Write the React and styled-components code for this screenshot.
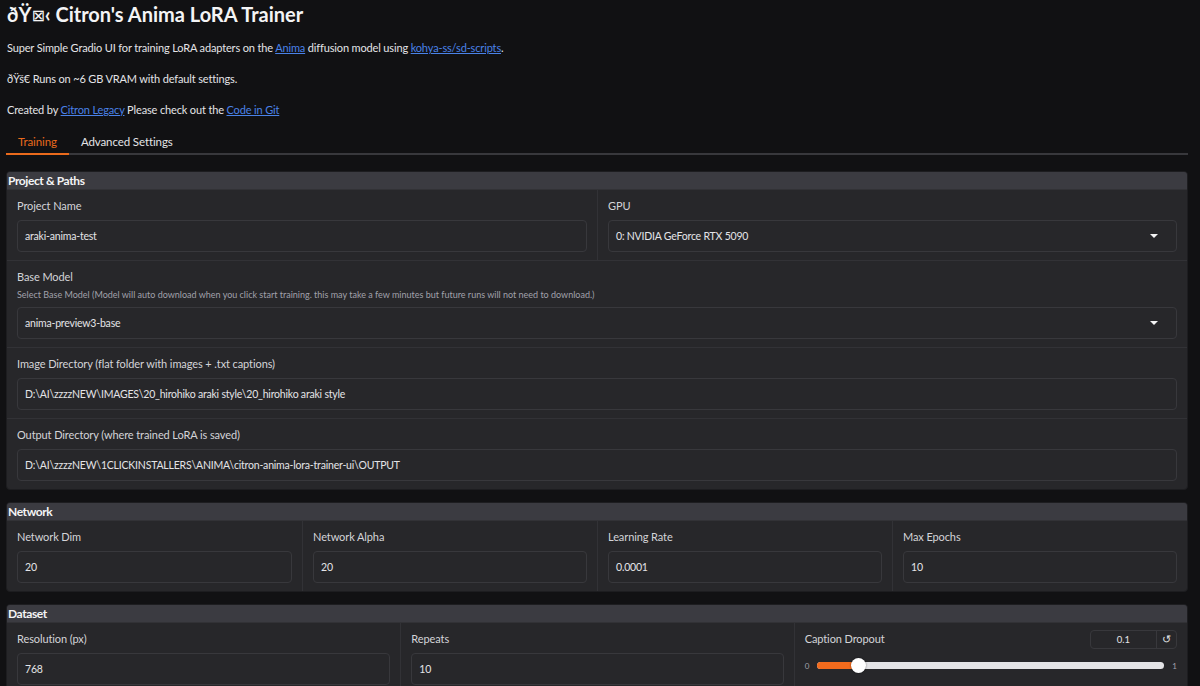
import React from 'react'
import styled, { createGlobalStyle } from 'styled-components';

const GlobalStyle = createGlobalStyle`
  html, body {
    margin: 0;
    padding: 0;
    background: #111113;
  }
  body {
    font-family: Lato, "Liberation Sans", sans-serif;
    color: #e4e4e7;
    overflow: hidden;
  }
`

const Page = styled.div`
  width: 1200px;
  height: 686px;
  box-sizing: border-box;
  padding: 0 12px 0 6px;
  overflow: hidden;
`

const Title = styled.h1`
  margin: 0;
  padding: 2px 0 0 1px;
  font-size: 20px;
  line-height: 24px;
  font-weight: 700;
  color: #f4f4f5;
`

const Para = styled.p`
  margin: 0;
  padding-left: 1px;
  font-size: 11px;
  letter-spacing: -0.15px;
  line-height: 16px;
  color: #e4e4e7;
  margin-top: ${(p) => p.$top}px;
`

const Link = styled.a`
  color: #4a82e8;
  text-decoration: underline;
`

const Missing = styled.span`
  display: inline-block;
  font-size: 16px;
  font-family: "DejaVu Sans", sans-serif;
  font-weight: 400;
  vertical-align: 1px;
`

const TabBar = styled.div`
  display: flex;
  margin-top: 13px;
  border-bottom: 2px solid #38383c;
`

const Tab = styled.div`
  padding: 0 12px;
  height: 24px;
  line-height: 22px;
  font-size: 11.5px;
  letter-spacing: -0.1px;
  color: ${(p) => (p.$active ? '#ea6a1c' : '#e4e4e7')};
  margin-bottom: -2px;
  box-sizing: border-box;
  border-bottom: 2px solid ${(p) => (p.$active ? '#ea6a1c' : 'transparent')};
`

const Panel = styled.section`
  margin-top: ${(p) => p.$top}px;
  background: #27272a;
  border: 1px solid #1d1d20;
  border-radius: 4px;
  overflow: hidden;
`

const PanelHeader = styled.div`
  height: 17px;
  line-height: 17px;
  background: #3b3b41;
  padding-left: 1px;
  font-size: 12px;
  letter-spacing: -0.4px;
  font-weight: 700;
  color: #f4f4f5;
`

const Row = styled.div`
  display: grid;
  grid-template-columns: repeat(${(p) => p.$cols}, 1fr);
  border-top: 1px solid #323236;
  &:first-of-type {
    border-top: none;
  }
`

const Cell = styled.div`
  padding: 8px 10px 8px;
  border-left: 1px solid #323236;
  &:first-child {
    border-left: none;
  }
`

const LabelLine = styled.div`
  display: flex;
  align-items: center;
  justify-content: space-between;
  height: 16px;
`

const Label = styled.div`
  font-size: 11px;
  letter-spacing: -0.1px;
  line-height: 16px;
  color: #d4d4d8;
`

const Info = styled.div`
  font-size: 9px;
  line-height: 12px;
  color: #a1a1aa;
  margin-top: 4px;
`

const Field = styled.div`
  margin-top: 6px;
  height: 32px;
  box-sizing: border-box;
  border: 1px solid #38383c;
  border-radius: 4px;
  background: #27272a;
  display: flex;
  align-items: center;
  justify-content: space-between;
  padding: 0 18px 0 7px;
  font-size: 10.5px;
  letter-spacing: -0.2px;
  color: #e4e4e7;
`

const Caret = styled.span`
  width: 0;
  height: 0;
  border-left: 4px solid transparent;
  border-right: 4px solid transparent;
  border-top: 4px solid #f4f4f5;
`

const NumberBox = styled.div`
  display: flex;
  height: 19px;
  box-sizing: border-box;
  border: 1px solid #38383c;
  border-radius: 4px;
  font-size: 9.5px;
  color: #e4e4e7;
`

const NumberValue = styled.div`
  width: 65px;
  display: flex;
  align-items: center;
  justify-content: center;
  border-right: 1px solid #38383c;
`

const ResetBtn = styled.div`
  width: 19px;
  display: flex;
  align-items: center;
  justify-content: center;
  font-size: 11px;
`

const SliderRow = styled.div`
  display: flex;
  align-items: center;
  gap: 8px;
  margin-top: 11px;
  height: 15px;
  font-size: 8px;
  color: #a1a1aa;
`

const Track = styled.div`
  position: relative;
  flex: 1;
  height: 7px;
  border-radius: 4px;
  background: #e4e4e7;
`

const Fill = styled.div`
  height: 100%;
  border-radius: 4px 0 0 4px;
  background: #f26b1d;
`

const Thumb = styled.div`
  position: absolute;
  top: 50%;
  width: 15px;
  height: 15px;
  margin: -7.5px 0 0 -7.5px;
  border-radius: 50%;
  background: #ffffff;
  box-shadow: 0 0 2px rgba(0, 0, 0, 0.5);
`

const TextField = ({ label, value, info, dropdown }) => (
  <Cell>
    <Label>{label}</Label>
    {info && <Info>{info}</Info>}
    <Field>
      <span>{value}</span>
      {dropdown && <Caret />}
    </Field>
  </Cell>
)

const Slider = ({ label, value, min, max }) => {
  const frac = (value - min) / (max - min)
  const pos = `calc(7.5px + ${frac} * (100% - 15px))`
  return (
    <Cell>
      <LabelLine>
        <Label>{label}</Label>
        <NumberBox>
          <NumberValue>{value}</NumberValue>
          <ResetBtn>↺</ResetBtn>
        </NumberBox>
      </LabelLine>
      <SliderRow>
        <span>{min}</span>
        <Track>
          <Fill style={{ width: pos }} />
          <Thumb style={{ left: pos }} />
        </Track>
        <span>{max}</span>
      </SliderRow>
    </Cell>
  )
}

const App = () => {
  return (
    <>
      <GlobalStyle />
      <Page>
        <Title>
          {'\u00F0\u0178'}<Missing>⊠</Missing>{'\u2039'} Citron's Anima LoRA Trainer
        </Title>
        <Para $top={12}>
          Super Simple Gradio UI for training LoRA adapters on the <Link>Anima</Link> diffusion model using{' '}
          <Link>kohya-ss/sd-scripts</Link>.
        </Para>
        <Para $top={15}>{'\u00F0\u0178\u0161\u20AC'} Runs on ~6 GB VRAM with default settings.</Para>
        <Para $top={15}>
          Created by <Link>Citron Legacy</Link> Please check out the <Link>Code in Git</Link>
        </Para>

        <TabBar>
          <Tab $active>Training</Tab>
          <Tab>Advanced Settings</Tab>
        </TabBar>

        <Panel $top={16}>
          <PanelHeader>Project &amp; Paths</PanelHeader>
          <Row $cols={2}>
            <TextField label='Project Name' value='araki-anima-test' />
            <TextField label='GPU' value='0: NVIDIA GeForce RTX 5090' dropdown />
          </Row>
          <Row $cols={1}>
            <TextField
              label='Base Model'
              info='Select Base Model (Model will auto download when you click start training. this may take a few minutes but future runs will not need to download.)'
              value='anima-preview3-base'
              dropdown
            />
          </Row>
          <Row $cols={1}>
            <TextField
              label='Image Directory (flat folder with images + .txt captions)'
              value='D:\AI\zzzzNEW\IMAGES\20_hirohiko araki style\20_hirohiko araki style'
            />
          </Row>
          <Row $cols={1}>
            <TextField
              label='Output Directory (where trained LoRA is saved)'
              value='D:\AI\zzzzNEW\1CLICKINSTALLERS\ANIMA\citron-anima-lora-trainer-ui\OUTPUT'
            />
          </Row>
        </Panel>

        <Panel $top={12}>
          <PanelHeader>Network</PanelHeader>
          <Row $cols={4}>
            <TextField label='Network Dim' value='20' />
            <TextField label='Network Alpha' value='20' />
            <TextField label='Learning Rate' value='0.0001' />
            <TextField label='Max Epochs' value='10' />
          </Row>
        </Panel>

        <Panel $top={12}>
          <PanelHeader>Dataset</PanelHeader>
          <Row $cols={3}>
            <TextField label='Resolution (px)' value='768' />
            <TextField label='Repeats' value='10' />
            <Slider label='Caption Dropout' value={0.1} min={0} max={1} />
          </Row>
        </Panel>
      </Page>
    </>
  )
}

export default App;
